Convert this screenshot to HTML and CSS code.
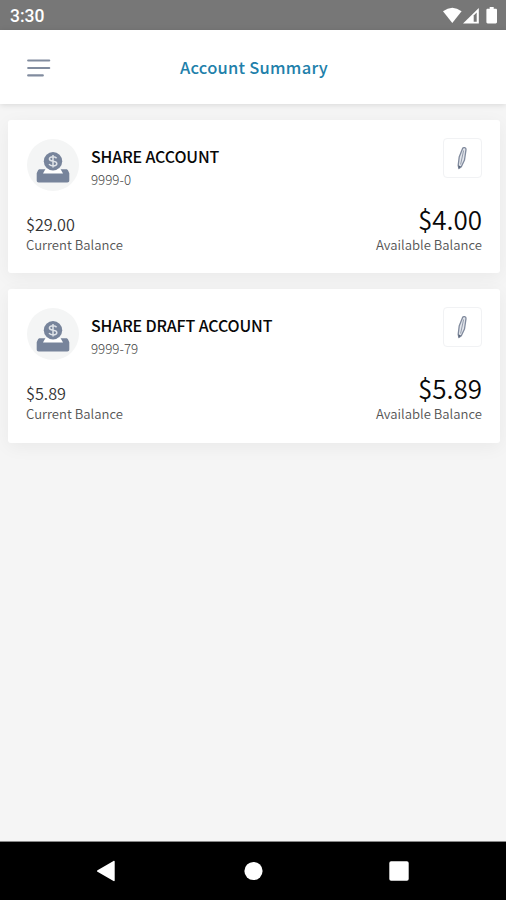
FILE: index.html
```html
<!DOCTYPE html>
<html lang="en">
<head>
<meta charset="utf-8">
<title>Account Summary</title>
<link rel="stylesheet" href="styles.css">
</head>
<body>
<svg class="defs" width="0" height="0" aria-hidden="true">
  <symbol id="deposit" viewBox="0 0 34 32">
    <path d="M4 18.200h26c1.300 0 1.900.6 2.200 1.600l1.100 2.400v7.300c0 1.300-.7 2-2 2H2.700c-1.300 0-2-.7-2-2v-7.300l1.100-2.400c.3-1 .9-1.600 2.200-1.600z" fill="#77849b"/>
    <path d="M9.500 18h15l2.500 4.600H7z" fill="#fff"/>
    <circle cx="17" cy="10.200" r="9.200" fill="#77849b"/>
    <path d="M20.600 7.300c-.7-1-2-1.500-3.600-1.500-2.200 0-3.600.9-3.600 2.300 0 3.300 7.400 1.100 7.400 4.400 0 1.500-1.500 2.400-3.700 2.400-1.900 0-3.300-.6-4.100-1.800M17 4v12.600" fill="none" stroke="#dfe3e8" stroke-width="1.500"/>
  </symbol>
  <symbol id="pencil" viewBox="0 0 14 24">
    <path d="M7.600 2.400c.8-1.500 3.700-.9 3.400 1.200L9.500 14 6.300 20.700l-2.400 1.800-.7-3.100 1-8.300z" fill="#e3e6ec" stroke="#808a9d" stroke-width="1.300" stroke-linejoin="round"/>
    <path d="M8.600 4.500 5.600 18.500" fill="none" stroke="#929bab" stroke-width="1"/>
    <path d="m3.300 19.300 2.700 1.200-2.100 2z" fill="#596579"/>
  </symbol>
</svg>
<div class="status">
  <span class="time">3:30</span>
  <svg class="signals" width="56" height="18" viewBox="0 0 56 18">
    <path d="M0 4.300Q9.300-3 18.600 4.300L9.300 16z" fill="#fff"/>
    <path d="M20 16.500 35.800 1v15.500z" fill="#fff"/>
    <path d="M30.700 8.500 33.700 5.500v9.300h-3z" fill="#777"/>
    <path d="M46.700 0h4v1.800h2c.8 0 1.300.5 1.300 1.300V15c0 .9-.5 1.400-1.300 1.400h-8c-.8 0-1.300-.5-1.300-1.400V3.100c0-.8.500-1.300 1.300-1.300h2z" fill="#fff"/>
  </svg>
</div>
<header class="header">
  <svg class="menu" width="24" height="20" viewBox="0 0 24 20">
    <path d="M1.200 2.500h21M1.200 10h21M1.200 17.400h14.600" stroke="#818c9f" stroke-width="2.200" stroke-linecap="round"/>
  </svg>
  <h1 class="title">Account Summary</h1>
</header>
<main class="accounts">
  <section class="card">
    <div class="top">
      <div class="avatar"><svg width="34" height="32"><use href="#deposit"/></svg></div>
      <div class="identity">
        <h2 class="name">SHARE ACCOUNT</h2>
        <div class="number">9999-0</div>
      </div>
      <div class="edit"><svg width="14" height="24"><use href="#pencil"/></svg></div>
    </div>
    <div class="balances">
      <div class="current"><div class="amount">$29.00</div><div class="label">Current Balance</div></div>
      <div class="available"><div class="amount">$4.00</div><div class="label">Available Balance</div></div>
    </div>
  </section>
  <section class="card">
    <div class="top">
      <div class="avatar"><svg width="34" height="32"><use href="#deposit"/></svg></div>
      <div class="identity">
        <h2 class="name">SHARE DRAFT ACCOUNT</h2>
        <div class="number">9999-79</div>
      </div>
      <div class="edit"><svg width="14" height="24"><use href="#pencil"/></svg></div>
    </div>
    <div class="balances">
      <div class="current"><div class="amount">$5.89</div><div class="label">Current Balance</div></div>
      <div class="available"><div class="amount">$5.89</div><div class="label">Available Balance</div></div>
    </div>
  </section>
</main>
<nav class="nav">
  <svg width="20" height="22" viewBox="0 0 20 22"><path d="M1.500 10.200 17.500 1c.6-.4 1.200 0 1.200.6v18.800c0 .7-.6 1-1.200.7L1.500 11.800c-.7-.5-.7-1.100 0-1.600z" fill="#fff"/></svg>
  <svg width="20" height="20" viewBox="0 0 20 20"><circle cx="10.500" cy="10" r="9.100" fill="#fff"/></svg>
  <svg width="20" height="20" viewBox="0 0 20 20"><rect x=".3" y=".3" width="19.400" height="19.400" rx="1.800" fill="#fff"/></svg>
</nav>
</body>
</html>
```
FILE: styles.css
```css
* { box-sizing: border-box; }
body {
  margin: 0;
  height: 900px;
  display: flex;
  flex-direction: column;
  background: #f5f5f5;
  font-family: "Noto Sans CJK SC", "Noto Sans", sans-serif;
  overflow: hidden;
}
svg { display: block; }
.defs { position: absolute; }
h1, h2 { margin: 0; }
.status {
  flex: none;
  height: 30px;
  padding: 0 8px 0 10px;
  display: flex;
  align-items: center;
  justify-content: space-between;
  background: #777;
  color: #fff;
}
.time { font: 500 17.500px/30px Roboto, sans-serif; padding-top: 2px; }
.signals { margin: 1px -1px 0 0; }
.header {
  flex: none;
  height: 74px;
  display: grid;
  grid-template-columns: 100px 1fr 100px;
  align-items: center;
  background: #fff;
  box-shadow: 0 1px 6px rgba(0, 0, 0, .12);
}
.menu { margin: 1px 0 0 26.500px; }
.title {
  padding: 0 0 1px 2px;
  text-align: center;
  font-size: 16.500px;
  line-height: 24px;
  font-weight: 500;
  letter-spacing: .24px;
  color: #2180aa;
}
.accounts {
  flex: 1;
  padding: 15.500px 6px 0 8px;
  display: flex;
  flex-direction: column;
  gap: 16px;
}
.card {
  height: 153.500px;
  padding: 18px 18px 0;
  background: #fff;
  border-radius: 3px;
  box-shadow: 0 4px 18px rgba(0, 0, 0, .05);
}
.top { display: flex; height: 60px; }
.avatar {
  width: 52px;
  height: 52px;
  margin: 1px 0 0 1px;
  padding-top: 4px;
  display: flex;
  align-items: center;
  justify-content: center;
  border-radius: 50%;
  background: #f4f5f5;
}
.identity { flex: 1; margin-left: 12px; padding-top: 7px; }
.name {
  font-size: 16px;
  line-height: 23px;
  font-weight: 500;
  letter-spacing: -.13px;
  color: #080808;
  white-space: nowrap;
}
.number { font-size: 13.300px; line-height: 23px; font-weight: 300; color: #444; }
.edit {
  width: 39px;
  height: 40px;
  padding-right: 2px;
  display: flex;
  align-items: center;
  justify-content: center;
  border: 1px solid #f1f2f4;
  border-radius: 4px;
}
.balances { display: flex; justify-content: space-between; align-items: flex-end; height: 56px; }
.amount { font-size: 16.200px; line-height: 22px; color: #333; font-weight: 350; }
.label { font-size: 13.100px; line-height: 19px; color: #555; font-weight: 350; }
.available { text-align: right; }
.available .amount { font-size: 26px; line-height: 32px; color: #080808; }
.nav {
  flex: none;
  height: 59px;
  padding: 0 97px 1px 96px;
  display: flex;
  align-items: center;
  justify-content: space-between;
  background: #000;
  border-top: 1px solid #888;
}
```
